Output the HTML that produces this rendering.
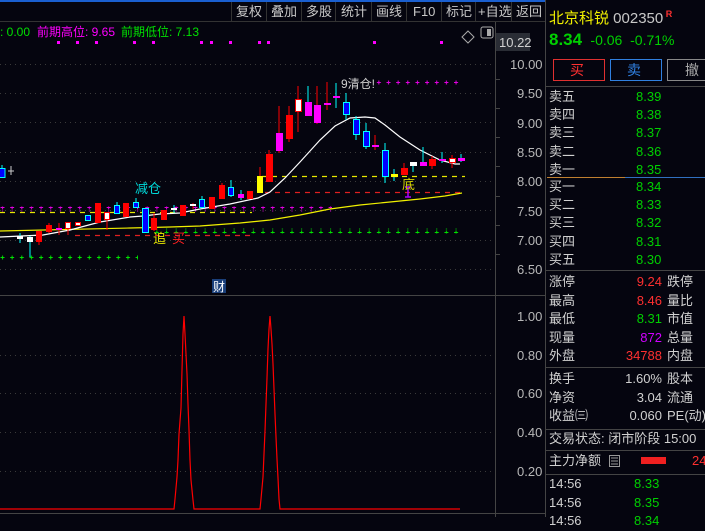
<!DOCTYPE html>
<html><head><meta charset="utf-8"><style>
*{margin:0;padding:0}
body{width:705px;height:517px;background:#05050f;overflow:hidden;position:relative;font-family:"Liberation Sans","Noto Sans CJK SC",sans-serif;font-size:13px;color:#c8c8c8}
.a{position:absolute;white-space:nowrap;line-height:16px}
.g{color:#00d000}.r{color:#ff3030}.w{color:#d0d0d0}.m{color:#d000ff}
</style></head><body>
<svg width="705" height="517" style="position:absolute;left:0;top:0" font-family="Liberation Sans,Noto Sans CJK SC,sans-serif">
<defs>
<pattern id="pm" x="0" y="0" width="9.65" height="5" patternUnits="userSpaceOnUse"><path d="M0.5 2.5h4M2.5 0.5v4" stroke="#e000e0" stroke-width="1"/></pattern>
<pattern id="pg" x="0" y="0" width="9.65" height="5" patternUnits="userSpaceOnUse"><path d="M0.5 2.5h4M2.5 0.5v4" stroke="#00e000" stroke-width="1"/></pattern>
</defs>
<rect x="0" y="0" width="545" height="2" fill="#1a5fd0"/>
<line x1="0" y1="21.5" x2="545" y2="21.5" stroke="#333"/>
<g stroke="#333"><line x1="231.5" y1="2" x2="231.5" y2="21"/><line x1="266.5" y1="2" x2="266.5" y2="21"/><line x1="301.5" y1="2" x2="301.5" y2="21"/><line x1="335.5" y1="2" x2="335.5" y2="21"/><line x1="371.5" y1="2" x2="371.5" y2="21"/><line x1="406.5" y1="2" x2="406.5" y2="21"/><line x1="441.5" y1="2" x2="441.5" y2="21"/><line x1="475.5" y1="2" x2="475.5" y2="21"/><line x1="511.5" y1="2" x2="511.5" y2="21"/></g>
<g fill="#c8c8c8" font-size="13"><text x="236" y="16">复权</text><text x="271" y="16">叠加</text><text x="306" y="16">多股</text><text x="341" y="16">统计</text><text x="376" y="16">画线</text><text x="413" y="16">F10</text><text x="446" y="16">标记</text><text x="478" y="16">+自选</text><text x="516" y="16">返回</text></g>
<line x1="495.5" y1="22" x2="495.5" y2="517" stroke="#444"/>
<line x1="545.5" y1="0" x2="545.5" y2="517" stroke="#444"/>
<line x1="0" y1="295.5" x2="545" y2="295.5" stroke="#444"/>
<line x1="0" y1="513.5" x2="545" y2="513.5" stroke="#444"/>
<text x="0" y="36" font-size="12" fill="#00e000">: 0.00</text>
<text x="37" y="36" font-size="12" fill="#ff00ff">前期高位: 9.65</text>
<text x="121" y="36" font-size="12" fill="#00e000">前期低位: 7.13</text>
<path d="M468 31 l6 6 -6 6 -6 -6z" fill="none" stroke="#aaa"/>
<rect x="481" y="27" width="12" height="11" rx="2" fill="none" stroke="#aaa"/><rect x="487" y="29" width="4" height="7" fill="#aaa"/>
<rect x="496" y="33" width="34" height="18" fill="#2a2d35"/>
<text x="499" y="47" font-size="13" fill="#d0d0d0">10.22</text>
<g fill="#b8b8b8" font-size="13"><text x="510" y="69">10.00</text><text x="517" y="98">9.50</text><text x="517" y="128">9.00</text><text x="517" y="157">8.50</text><text x="517" y="186">8.00</text><text x="517" y="216">7.50</text><text x="517" y="245">7.00</text><text x="517" y="274">6.50</text>
<text x="517" y="321">1.00</text><text x="517" y="360">0.80</text><text x="517" y="398">0.60</text><text x="517" y="437">0.40</text><text x="517" y="476">0.20</text></g>
<g stroke="#444"><line x1="495" y1="79.5" x2="500" y2="79.5"/><line x1="495" y1="108.5" x2="500" y2="108.5"/><line x1="495" y1="137.5" x2="500" y2="137.5"/><line x1="495" y1="166.5" x2="500" y2="166.5"/><line x1="495" y1="196.5" x2="500" y2="196.5"/><line x1="495" y1="225.5" x2="500" y2="225.5"/><line x1="495" y1="254.5" x2="500" y2="254.5"/></g>
<g stroke="#3a3a3a" stroke-dasharray="1,4"><line x1="0" y1="64.5" x2="493" y2="64.5"/><line x1="0" y1="93.5" x2="493" y2="93.5"/><line x1="0" y1="122.5" x2="493" y2="122.5"/><line x1="0" y1="152.5" x2="493" y2="152.5"/><line x1="0" y1="181.5" x2="493" y2="181.5"/><line x1="0" y1="210.5" x2="493" y2="210.5"/><line x1="0" y1="240.5" x2="493" y2="240.5"/><line x1="0" y1="269.5" x2="493" y2="269.5"/>
<line x1="0" y1="355.5" x2="493" y2="355.5"/><line x1="0" y1="393.5" x2="493" y2="393.5"/><line x1="0" y1="432.5" x2="493" y2="432.5"/><line x1="0" y1="471.5" x2="493" y2="471.5"/></g>
<g fill="#ff00ff"><rect x="57" y="41" width="3" height="3"/><rect x="76" y="41" width="3" height="3"/><rect x="95" y="41" width="3" height="3"/><rect x="133" y="41" width="3" height="3"/><rect x="152" y="41" width="3" height="3"/><rect x="200" y="41" width="3" height="3"/><rect x="210" y="41" width="3" height="3"/><rect x="229" y="41" width="3" height="3"/><rect x="258" y="41" width="3" height="3"/><rect x="267" y="41" width="3" height="3"/><rect x="373" y="41" width="3" height="3"/><rect x="440" y="41" width="3" height="3"/></g>
<rect x="0" y="206.5" width="332" height="5" fill="url(#pm)"/>
<rect x="371" y="80.5" width="92" height="5" fill="url(#pm)"/>
<rect x="150" y="228.5" width="313" height="5" fill="url(#pg)"/>
<rect x="0" y="254.5" width="138" height="5" fill="url(#pg)"/>
<g stroke-dasharray="5,5" stroke-width="1.3"><line x1="0" y1="212.5" x2="252" y2="212.5" stroke="#e8e800"/><line x1="262" y1="176.5" x2="465" y2="176.5" stroke="#e8e800"/><line x1="75" y1="235.5" x2="255" y2="235.5" stroke="#e02020"/><line x1="265" y1="192.5" x2="465" y2="192.5" stroke="#e02020"/></g>
<polyline fill="none" stroke="#f0f000" stroke-width="1.2" points="0,231 130,228 170,227 200,226 240,223 270,220 300,215 330,209 360,205 390,202 420,199 445,196 462,193"/>
<polyline fill="none" stroke="#ffffff" stroke-width="1.2" points="0,237 43,235 70,230 100,222 130,217 143,216 160,214 180,213 200,209 230,204 258,198 270,192 285,178 300,162 320,140 335,126 350,118 365,117 375,118 385,125 400,137 420,150 440,160 455,164 460,164"/>
<g stroke-width="1">
<path d="M2 165v12" stroke="#0ff"/><rect x="-1" y="168.5" width="6" height="9" fill="#00f" stroke="#0ff"/>
<path d="M11 166v9M8 171h6" stroke="#ccc"/>
<path d="M20 233v10" stroke="#0ff"/><rect x="17" y="236" width="6" height="3" fill="#fff"/>
<path d="M30 236v21" stroke="#0ff"/><rect x="27" y="237" width="6" height="5" fill="#fff"/>
<path d="M39 231v14" stroke="#f00"/><rect x="36" y="231" width="6" height="11" fill="#f00"/>
<path d="M49 223v10" stroke="#f00"/><rect x="46" y="225" width="6" height="7" fill="#f00"/>
<path d="M59 223v12" stroke="#f00"/><rect x="56" y="228" width="6" height="2" fill="#f0f"/>
<path d="M68 222v13" stroke="#f00"/><rect x="65.5" y="222.5" width="5" height="6" fill="#fff" stroke="#f00"/>
<rect x="75.5" y="222.5" width="5" height="3" fill="#fff" stroke="#f00"/>
<rect x="85.5" y="215.5" width="5" height="5" fill="#00f" stroke="#0ff"/>
<path d="M98 203v20" stroke="#f00"/><rect x="95" y="203" width="6" height="20" fill="#f00"/>
<path d="M107 212v18" stroke="#f00"/><rect x="104.5" y="212.5" width="5" height="7" fill="#fff" stroke="#f00"/>
<path d="M117 202v11" stroke="#0ff"/><rect x="114.5" y="205.5" width="5" height="8" fill="#00f" stroke="#0ff"/>
<rect x="123" y="203" width="6" height="14" fill="#f00"/>
<path d="M136 198v10" stroke="#0ff"/><rect x="133.5" y="202.5" width="5" height="5" fill="#00f" stroke="#0ff"/>
<rect x="142.5" y="208.5" width="6" height="24" fill="#00f" stroke="#0ff"/>
<path d="M154 213v18" stroke="#f00"/><rect x="151" y="218" width="6" height="12" fill="#f00"/>
<rect x="161" y="210" width="6" height="10" fill="#f00"/>
<path d="M174 205v8" stroke="#0ff"/><rect x="171" y="208" width="6" height="2" fill="#fff"/>
<rect x="180" y="205" width="6" height="11" fill="#f00"/>
<path d="M193 203v6" stroke="#f00"/><rect x="190" y="204" width="6" height="2" fill="#fff"/>
<path d="M202 196v12" stroke="#0ff"/><rect x="199.5" y="199.5" width="5" height="8" fill="#00f" stroke="#0ff"/>
<rect x="209" y="197" width="6" height="12" fill="#f00"/>
<path d="M222 183v16" stroke="#f00"/><rect x="219" y="185" width="6" height="14" fill="#f00"/>
<path d="M231 180v17" stroke="#0ff"/><rect x="228.5" y="187.5" width="5" height="8" fill="#00f" stroke="#0ff"/>
<path d="M241 190v10" stroke="#0ff"/><rect x="238" y="194" width="6" height="4" fill="#f0f"/>
<rect x="247" y="191" width="6" height="8" fill="#f00"/>
<path d="M260 167v26" stroke="#f00"/><rect x="257" y="176" width="6" height="17" fill="#ff0"/>
<path d="M269 150v32" stroke="#f00"/><rect x="266" y="154" width="7" height="28" fill="#f00"/>
<path d="M279 106v47" stroke="#f00"/><rect x="276" y="133" width="7" height="18" fill="#f0f"/>
<path d="M289 106v36" stroke="#f00"/><rect x="286" y="115" width="7" height="24" fill="#f00"/>
<path d="M298 86v46" stroke="#f00"/><rect x="295.5" y="99.5" width="6" height="12" fill="#fff" stroke="#f00"/>
<path d="M308 86v30" stroke="#0ff"/><rect x="305" y="102" width="7" height="14" fill="#f0f"/>
<path d="M317 86v38" stroke="#f00"/><rect x="314" y="105" width="7" height="18" fill="#f0f"/>
<path d="M327 82v28" stroke="#f00"/><rect x="324" y="103" width="7" height="2" fill="#f0f"/>
<path d="M336 83v25" stroke="#0ff"/><rect x="333" y="96" width="7" height="2" fill="#f0f"/>
<path d="M346 93v27" stroke="#0ff"/><rect x="343.5" y="102.5" width="6" height="12" fill="#00f" stroke="#0ff"/>
<path d="M356 116v24" stroke="#0ff"/><rect x="353.5" y="119.5" width="6" height="15" fill="#00f" stroke="#0ff"/>
<path d="M366 123v26" stroke="#0ff"/><rect x="363.5" y="131.5" width="6" height="15" fill="#00f" stroke="#0ff"/>
<path d="M375 135v15" stroke="#f00"/><rect x="372" y="145" width="7" height="2" fill="#f0f"/>
<path d="M385 143v40" stroke="#0ff"/><rect x="382.5" y="150.5" width="6" height="26" fill="#00f" stroke="#0ff"/>
<path d="M394 169v12" stroke="#0ff"/><rect x="391" y="174" width="7" height="3" fill="#ff0"/>
<path d="M404 163v12" stroke="#f00"/><rect x="401" y="168" width="7" height="7" fill="#f00"/>
<path d="M413 162v10" stroke="#0ff"/><rect x="410" y="162" width="7" height="4" fill="#fff"/>
<path d="M423 147v19" stroke="#0ff"/><rect x="420" y="162" width="7" height="4" fill="#f0f"/>
<path d="M432 156v13" stroke="#f00"/><rect x="429" y="159" width="7" height="7" fill="#f00"/>
<path d="M442 152v11" stroke="#0ff"/><rect x="439" y="159" width="7" height="2" fill="#f0f"/>
<path d="M452 155v13" stroke="#f00"/><rect x="449.5" y="158.5" width="6" height="4" fill="#fff" stroke="#f00"/>
<path d="M461 154v8" stroke="#0ff"/><rect x="458" y="158" width="7" height="3" fill="#f0f"/>
<path d="M408 187v10M405 187h6M405 197h6" stroke="#a0f" stroke-width="1.5"/>
</g>
<g font-size="13"><text x="135" y="193" fill="#00d8d8">减仓</text><text x="153" y="243" fill="#e8e800">追</text><text x="172" y="243" fill="#ff2020">买</text><text x="402" y="189" fill="#d8d800">底</text><text x="341" y="88" fill="#d0d0d0" font-size="12">9清仓!</text></g>
<rect x="212" y="279" width="14" height="14" fill="#1a3f7a"/><text x="213" y="291" font-size="12" fill="#fff">财</text>
<polyline fill="none" stroke="#f00" stroke-width="1.2" points="0,509 174,509 175,499 177,477 178,460 179,434 181,408 182,370 183,334 184,316 185,334 186,354 187,374 188,404 189,430 190,460 191,480 193,500 194,509 260,509 261,499 263,477 264,454 265,431 266,404 267,378 268,349 269,329 270,316 271,329 272,344 273,364 274,389 275,414 276,437 277,459 278,478 279,499 280,509 460,509"/>
<line x1="545" y1="86.5" x2="705" y2="86.5" stroke="#444"/>
<line x1="547" y1="177.5" x2="625" y2="177.5" stroke="#c08030"/><line x1="625" y1="177.5" x2="705" y2="177.5" stroke="#3070c0"/>
<line x1="545" y1="270.5" x2="705" y2="270.5" stroke="#444"/>
<line x1="545" y1="367.5" x2="705" y2="367.5" stroke="#444"/>
<line x1="545" y1="429.5" x2="705" y2="429.5" stroke="#444"/>
<line x1="545" y1="450.5" x2="705" y2="450.5" stroke="#444"/>
<line x1="545" y1="474.5" x2="705" y2="474.5" stroke="#444"/>
<rect x="553.5" y="59.5" width="51" height="21" fill="none" stroke="#e03030"/>
<rect x="610.5" y="59.5" width="51" height="21" fill="none" stroke="#3080e0"/>
<rect x="667.5" y="59.5" width="50" height="21" fill="none" stroke="#888"/>
<rect x="641" y="457" width="25" height="7" fill="#f02020"/>
<rect x="609.5" y="455.5" width="10" height="11" fill="none" stroke="#999"/><path d="M611 458h7M611 461h7M611 464h7" stroke="#999"/>
</svg>
<div class="a" style="left:549px;top:6px;font-size:15px;color:#f0f000">北京科锐 <span style="color:#c8c8c8">002350</span><sup style="color:#ff3030;font-size:9px;font-weight:bold"> R</sup></div>
<div class="a" style="left:549px;top:32px;font-size:16px"><b class="g" style="font-size:17px">8.34</b> <span class="g" style="font-size:14px">&nbsp;-0.06&nbsp; -0.71%</span></div>
<div class="a r" style="left:570px;top:62px;font-size:14px">买</div>
<div class="a" style="left:627px;top:62px;font-size:14px;color:#3080e0">卖</div>
<div class="a" style="left:685px;top:62px;font-size:14px;color:#aaa">撤</div>
<div class="a w" style="left:549px;top:88px;line-height:18.2px">卖五<br>卖四<br>卖三<br>卖二<br>卖一</div>
<div class="a g" style="left:636px;top:88px;line-height:18.2px">8.39<br>8.38<br>8.37<br>8.36<br>8.35</div>
<div class="a w" style="left:549px;top:178px;line-height:18.2px">买一<br>买二<br>买三<br>买四<br>买五</div>
<div class="a g" style="left:636px;top:178px;line-height:18.2px">8.34<br>8.33<br>8.32<br>8.31<br>8.30</div>
<div class="a w" style="left:549px;top:273px;line-height:18.5px">涨停<br>最高<br>最低<br>现量<br>外盘</div>
<div class="a" style="left:592px;top:273px;line-height:18.5px;text-align:right;width:70px"><span class="r">9.24</span><br><span class="r">8.46</span><br><span class="g">8.31</span><br><span class="m">872</span><br><span class="r">34788</span></div>
<div class="a w" style="left:667px;top:273px;line-height:18.5px">跌停<br>量比<br>市值<br>总量<br>内盘</div>
<div class="a w" style="left:549px;top:370px;line-height:18.5px">换手<br>净资<br>收益㈢</div>
<div class="a w" style="left:592px;top:370px;line-height:18.5px;text-align:right;width:70px">1.60%<br>3.04<br>0.060</div>
<div class="a w" style="left:667px;top:370px;line-height:18.5px">股本<br>流通<br>PE(动)</div>
<div class="a w" style="left:549px;top:431px">交易状态: 闭市阶段 15:00</div>
<div class="a w" style="left:549px;top:453px">主力净额</div>
<div class="a r" style="left:692px;top:453px">24</div>
<div class="a w" style="left:549px;top:475px;line-height:18.5px">14:56<br>14:56<br>14:56</div>
<div class="a g" style="left:634px;top:475px;line-height:18.5px">8.33<br>8.35<br>8.34</div>
</body></html>
